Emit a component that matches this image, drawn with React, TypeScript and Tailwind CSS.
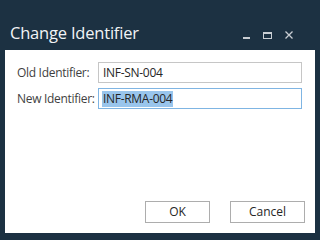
export default function App() {
  return (
    <div
      className="w-[320px] h-[240px] bg-[#1c3142] flex flex-col overflow-hidden"
      style={{ fontFamily: '"Open Sans", "Noto Sans", sans-serif' }}
    >
      {/* Title bar */}
      <div className="h-[50px] flex items-end pb-[7px] pl-[10px] pr-[27px]">
        <span className="text-[16.5px] leading-[20px] text-[#f2f4f6] tracking-[-0.2px]">Change Identifier</span>
        <div className="ml-auto flex items-center gap-[13px] mb-[3px] text-[#c9ced3]">
          <svg width="7" height="9" viewBox="0 0 7 9" className="mt-[1px]">
            <rect x="0" y="6" width="7" height="2" fill="currentColor" />
          </svg>
          <svg width="9" height="7" viewBox="0 0 9 7">
            <rect x="0.5" y="0.5" width="8" height="6" fill="none" stroke="currentColor" />
            <rect x="0" y="0" width="9" height="2" fill="currentColor" />
          </svg>
          <svg width="8" height="8" viewBox="0 0 8 8">
            <path d="M0.5 0.5 L7.5 7.5 M7.5 0.5 L0.5 7.5" stroke="currentColor" strokeWidth="1.3" />
          </svg>
        </div>
      </div>

      {/* Content panel */}
      <div className="mx-[5px] h-[183px] bg-white flex flex-col pt-[12px] pl-[12px] pr-[10px] pb-[10px]">
        <div className="grid grid-cols-[81px_204px] gap-y-[5px] text-[12px] tracking-[-0.3px]">
          <span className="self-center whitespace-nowrap text-[#3f3f3f]">Old Identifier:</span>
          <div className="h-[21px] border border-[#c6c6c6] px-[4px] flex items-center text-[#262626]">
            INF-SN-004
          </div>
          <span className="self-center whitespace-nowrap text-[#3f3f3f]">New Identifier:</span>
          <div className="h-[21px] border border-[#7fb5e3] px-[3px] flex items-center text-[#262626]">
            <span className="bg-[#99c5ec] leading-[16px] px-[1px]">INF-RMA-004</span>
          </div>
        </div>

        <div className="mt-auto flex justify-end gap-[20px] text-[12px] text-[#262626]">
          <button className="w-[65px] h-[22px] border border-[#adadad] bg-white flex items-center justify-center">
            OK
          </button>
          <button className="w-[75px] h-[22px] border border-[#adadad] bg-white flex items-center justify-center">
            Cancel
          </button>
        </div>
      </div>
    </div>
  );
}
